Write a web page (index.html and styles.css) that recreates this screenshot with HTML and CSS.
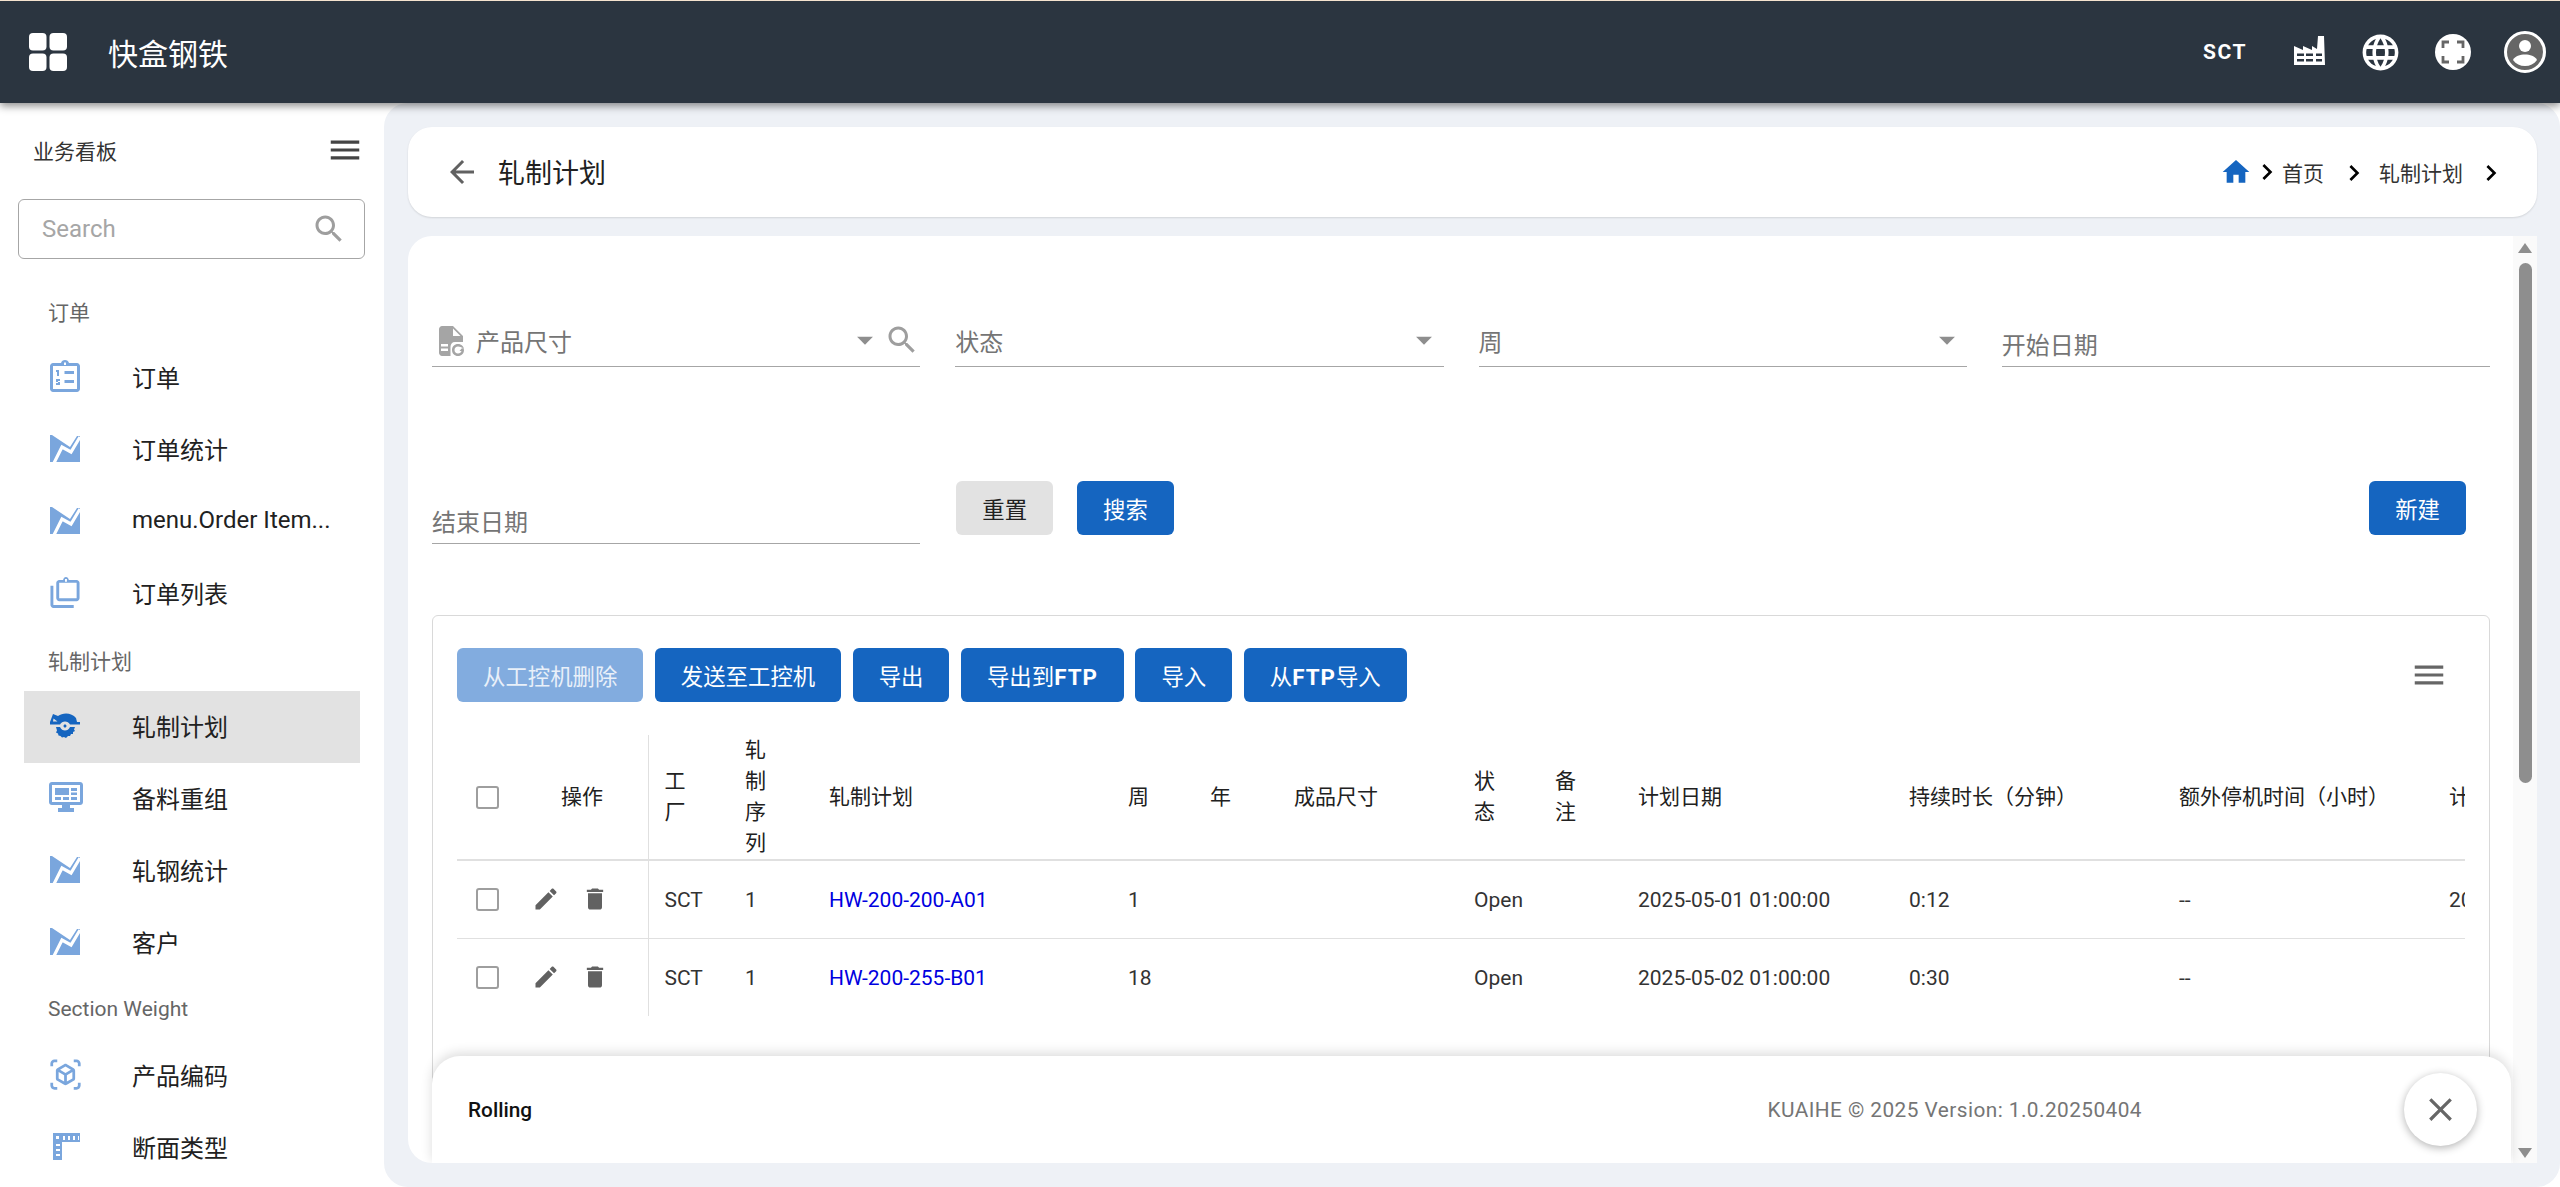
FILE: index.html
```html
<!DOCTYPE html>
<html lang="zh">
<head>
  <meta charset="UTF-8" />
  <meta name="viewport" content="width=device-width, initial-scale=1.0" />
  <title>轧制计划</title>
  <link rel="stylesheet" href="styles.css">
</head>
<body>
  <svg class="defs" width="0" height="0">
    <symbol id="i-chart" viewBox="0 0 30 27"><path d="M0 0H2L11 6L20 12L27 1H30V27H0Z"/><path d="M4 28L12 12L21 17L30 2" fill="none" stroke="#fff" stroke-width="3.200"/></symbol>
    <symbol id="i-search" viewBox="0 0 24 24"><path d="M15.500 14h-.79l-.28-.27C15.410 12.590 16 11.110 16 9.500 16 5.910 13.090 3 9.500 3S3 5.910 3 9.500 5.910 16 9.500 16c1.610 0 3.090-.59 4.230-1.570l.27.28v.79l5 4.990L20.490 19l-4.990-5zm-6 0C7.010 14 5 11.990 5 9.500S7.010 5 9.500 5 14 7.010 14 9.500 11.990 14 9.500 14z"/></symbol>
    <symbol id="i-menu" viewBox="0 0 24 24"><path d="M3 18h18v-2H3v2zm0-5h18v-2H3v2zm0-7v2h18V6H3z"/></symbol>
    <symbol id="i-chev" viewBox="0 0 24 24"><path d="M8.590 16.590L13.170 12 8.590 7.410 10 6l6 6-6 6z"/></symbol>
    <symbol id="i-drop" viewBox="0 0 24 24"><path d="M7 10l5 5 5-5z"/></symbol>
    <symbol id="i-edit" viewBox="0 0 24 24"><path d="M3 17.250V21h3.750L17.810 9.940l-3.750-3.750L3 17.250zM20.710 7.040c.39-.39.39-1.020 0-1.410l-2.340-2.340c-.39-.39-1.020-.39-1.410 0l-1.830 1.830 3.750 3.750 1.830-1.830z"/></symbol>
    <symbol id="i-del" viewBox="0 0 24 24"><path d="M6 19c0 1.100.9 2 2 2h8c1.100 0 2-.9 2-2V7H6v12zM19 4h-3.500l-1-1h-5l-1 1H5v2h14V4z"/></symbol>
  </svg>

  <header class="topbar">
    <svg class="logo" viewBox="0 0 38 38"><rect width="17.500" height="17.500" rx="4"/><rect x="20.500" width="17.500" height="17.500" rx="4"/><rect y="20.500" width="17.500" height="17.500" rx="4"/><rect x="20.500" y="20.500" width="17.500" height="17.500" rx="4"/></svg>
    <div class="brand">快盒钢铁</div>
    <div class="top-actions">
      <span class="plant">SCT</span>
      <svg class="top-ico factory" viewBox="0 0 31 29"><path fill-rule="evenodd" d="M0 29V10L9 14V10L18 14V10L23 13L24 0H30L31 29ZM3 17.500V20H10V17.500ZM12 17.500V20H19V17.500ZM22 17.500V20H28V17.500ZM3 23V25.500H10V23ZM12 23V25.500H19V23ZM22 23V25.500H28V23Z"/></svg>
      <svg class="top-ico globe" viewBox="0 0 24 24"><path d="M11.990 2C6.470 2 2 6.480 2 12s4.470 10 9.990 10C17.520 22 22 17.520 22 12S17.520 2 11.990 2zm6.930 6h-2.950c-.32-1.250-.78-2.450-1.380-3.560 1.840.63 3.370 1.910 4.330 3.560zM12 4.040c.83 1.200 1.480 2.530 1.910 3.960h-3.820c.43-1.430 1.080-2.760 1.910-3.960zM4.260 14C4.100 13.360 4 12.690 4 12s.1-1.360.26-2h3.380c-.08.66-.14 1.320-.14 2 0 .68.06 1.340.14 2H4.260zm.82 2h2.950c.32 1.250.78 2.450 1.380 3.560-1.840-.63-3.370-1.900-4.330-3.560zm2.950-8H5.080c.96-1.660 2.490-2.930 4.330-3.560C8.810 5.550 8.350 6.750 8.030 8zM12 19.960c-.83-1.200-1.480-2.530-1.910-3.960h3.820c-.43 1.430-1.080 2.760-1.910 3.960zM14.340 14H9.660c-.09-.66-.16-1.320-.16-2 0-.68.07-1.350.16-2h4.680c.09.65.16 1.320.16 2 0 .68-.07 1.340-.16 2zm.25 5.560c.6-1.110 1.060-2.310 1.380-3.560h2.950c-.96 1.650-2.490 2.930-4.330 3.560zM16.360 14c.08-.66.14-1.320.14-2 0-.68-.06-1.340-.14-2h3.380c.16.64.26 1.310.26 2s-.1 1.360-.26 2h-3.380z"/></svg>
      <svg class="top-ico full" viewBox="0 0 36 36"><circle cx="18" cy="18" r="18"/><path d="M8 14V8H14M22 8H28V14M28 22V28H22M14 28H8V22" fill="none" stroke="#666" stroke-width="2.800"/></svg>
      <svg class="top-ico account" viewBox="0 0 42 42"><circle cx="21" cy="21" r="19.500" fill="#666" stroke="#fff" stroke-width="3"/><circle cx="21" cy="15" r="6" fill="#fff"/><path d="M9 29C11 25 16 23.500 21 23.500S31 25 33 29C30 33 26 35 21 35S12 33 9 29Z" fill="#fff"/></svg>
    </div>
  </header>

  <div class="app">
    <aside class="sidebar">
      <div class="side-head">
        <span>业务看板</span>
        <svg class="side-burger"><use href="#i-menu"/></svg>
      </div>
      <div class="side-search">
        <span>Search</span>
        <svg class="search-ico"><use href="#i-search"/></svg>
      </div>

      <div class="nav-label">订单</div>
      <div class="nav-item">
        <svg class="nav-ico" viewBox="0 0 30 32"><path fill-rule="evenodd" d="M3 3H11C11.500 1 13 0 15 0S18.500 1 19 3H27C28.500 3 30 4.500 30 6V29C30 30.500 28.500 32 27 32H3C1.500 32 0 30.500 0 29V6C0 4.500 1.500 3 3 3ZM3 6V29H27V6ZM14 2.500V5H16V2.500ZM14.500 11H24V14H14.500ZM14.500 20H24V23H14.500ZM6 10H9V16H7V12H6ZM6 19H10V21H8V22H10V25H6V23H8V22H6Z"/></svg>
        <span>订单</span>
      </div>
      <div class="nav-item"><svg class="nav-ico chart"><use href="#i-chart"/></svg><span>订单统计</span></div>
      <div class="nav-item"><svg class="nav-ico chart"><use href="#i-chart"/></svg><span>menu.Order Item...</span></div>
      <div class="nav-item">
        <svg class="nav-ico" viewBox="0 0 30 33"><path fill-rule="evenodd" d="M9 4H13C13.500 2 14.500 1 16 1S18.500 2 19 4H27C28.500 4 30 5.500 30 7V23C30 24.500 28.500 26 27 26H9C7.500 26 6 24.500 6 23V7C6 5.500 7.500 4 9 4ZM9 7V23H27V7ZM15 3V6H17V3ZM0 10H3V30H24V33H3C1.500 33 0 31.500 0 30Z"/></svg>
        <span>订单列表</span>
      </div>

      <div class="nav-label">轧制计划</div>
      <div class="nav-item active">
        <svg class="nav-ico saw" viewBox="0 0 30 25"><path fill-rule="evenodd" d="M0 9L3 1L8 3C13 -1 22 -.5 26 5L27 9H30V11.500H20C19 9.500 17 8.500 15 8.500S11 9.500 10 11.500H0ZM3.500 5.500L3 8.500H7.500ZM15 11.500C15.900 11.500 16.500 12.100 16.500 13S15.900 14.500 15 14.500S13.500 13.900 13.500 13S14.100 11.500 15 11.500ZM6 14H10C11 16.500 13 17.500 15 17.500S19 16.500 20 14H25L24 16.500L25 18L23 19L23 21L21 21L20 23L18 23L16 25L14 24L12 24.500L10.500 23L8.500 22.500L8 20.500L6 19.500L7 17.500Z"/></svg>
        <span>轧制计划</span>
      </div>
      <div class="nav-item">
        <svg class="nav-ico monitor" viewBox="0 0 34 30"><path fill-rule="evenodd" d="M3 0H31C32.700 0 34 1.300 34 3V20C34 21.700 32.700 23 31 23H21V26H25V30H9V26H13V23H3C1.300 23 0 21.700 0 20V3C0 1.300 1.300 0 3 0ZM3 3V20H31V3ZM6 6H20V13H6ZM22 6H28V9H22ZM22 10.500H28V13H22ZM6 15H12V18H6ZM14 15H20V18H14ZM22 15H28V18H22Z"/></svg>
        <span>备料重组</span>
      </div>
      <div class="nav-item"><svg class="nav-ico chart"><use href="#i-chart"/></svg><span>轧钢统计</span></div>
      <div class="nav-item"><svg class="nav-ico chart"><use href="#i-chart"/></svg><span>客户</span></div>

      <div class="nav-label">Section Weight</div>
      <div class="nav-item">
        <svg class="nav-ico cube" viewBox="0 0 24 24"><path d="M3 4c0-.55.45-1 1-1h2V1H4C2.340 1 1 2.340 1 4v2h2V4zm0 16v-2H1v2c0 1.660 1.340 3 3 3h2v-2H4c-.55 0-1-.45-1-1zM20 1h-2v2h2c.55 0 1 .45 1 1v2h2V4c0-1.660-1.340-3-3-3zm1 19c0 .55-.45 1-1 1h-2v2h2c1.660 0 3-1.340 3-3v-2h-2v2zm-2-5.130V9.130c0-.72-.38-1.380-1-1.730l-5-2.880c-.31-.18-.65-.27-1-.27s-.69.09-1 .27L6 7.390c-.62.36-1 1.020-1 1.740v5.740c0 .72.38 1.380 1 1.730l5 2.880c.31.18.65.27 1 .27s.69-.09 1-.27l5-2.880c.62-.35 1-1.010 1-1.730zm-8 2.300l-4-2.300v-4.630l4 2.330v4.600zm1-6.330L8.040 8.530 12 6.250l3.960 2.280L12 10.840zm5 4.030l-4 2.300v-4.600l4-2.330v4.630z"/></svg>
        <span>产品编码</span>
      </div>
      <div class="nav-item">
        <svg class="nav-ico ruler" viewBox="0 0 28 27"><path fill-rule="evenodd" d="M1 0H28V9H10V27H1ZM4 3V6H7V3ZM11 3V7H13V3ZM16 3V7H18V3ZM21 3V7H23V3ZM26 3V7H27V3ZM4 11V13H8V11ZM4 16V18H8V16ZM4 21V23H8V21Z"/></svg>
        <span>断面类型</span>
      </div>
    </aside>

    <main class="main">
      <div class="page-head">
        <svg class="back" viewBox="0 0 24 24"><path d="M20 11H7.830l5.590-5.590L12 4l-8 8 8 8 1.410-1.410L7.830 13H20v-2z"/></svg>
        <h1>轧制计划</h1>
        <nav class="crumbs">
          <svg class="home" viewBox="0 0 24 24"><path d="M10 20v-6h4v6h5v-8h3L12 3 2 12h3v8z"/></svg>
          <svg class="chev"><use href="#i-chev"/></svg>
          <span>首页</span>
          <svg class="chev wide"><use href="#i-chev"/></svg>
          <span>轧制计划</span>
          <svg class="chev wide"><use href="#i-chev"/></svg>
        </nav>
      </div>

      <section class="content">
        <div class="scroll-area">
          <div class="filters">
            <div class="field">
              <svg class="file-ico" viewBox="0 0 26 30"><path fill-rule="evenodd" d="M3 0H14L24 10V16H16C13 16 11.500 18 11.500 21V30H3C1.500 30 0 28.500 0 27V3C0 1.500 1.500 0 3 0ZM14 2.500V10H21.500ZM2 18V20.500H9V18ZM2 22.500V25H9V22.500ZM19 18C22.500 18 25 20.500 25 24C25 27.500 22.500 30 19 30C15.500 30 13 27.500 13 24C13 20.500 15.500 18 19 18ZM19 20.500C17 20.500 15.500 22 15.500 24S17 27.500 19 27.500S22 26.500 22.500 25H20.500L23.500 21.500L25 24C25 24 23 20.500 19 20.500Z"/></svg>
              <span class="field-label">产品尺寸</span>
              <svg class="drop"><use href="#i-drop"/></svg>
              <svg class="field-search"><use href="#i-search"/></svg>
            </div>
            <div class="field"><span class="field-label">状态</span><svg class="drop last"><use href="#i-drop"/></svg></div>
            <div class="field"><span class="field-label">周</span><svg class="drop last"><use href="#i-drop"/></svg></div>
            <div class="field date"><span class="field-label">开始日期</span></div>
            <div class="field date"><span class="field-label">结束日期</span></div>
            <div class="form-btns">
              <button class="btn btn-grey">重置</button>
              <button class="btn">搜索</button>
            </div>
            <div class="form-new"><button class="btn">新建</button></div>
          </div>

          <div class="table-card">
            <div class="toolbar">
              <button class="btn btn-off">从工控机删除</button>
              <button class="btn">发送至工控机</button>
              <button class="btn">导出</button>
              <button class="btn">导出到<b>FTP</b></button>
              <button class="btn">导入</button>
              <button class="btn">从<b>FTP</b>导入</button>
              <svg class="tool-menu"><use href="#i-menu"/></svg>
            </div>
            <div class="table-wrap">
              <table class="grid">
                <colgroup>
                  <col class="c-check"><col class="c-ops"><col class="c-plant"><col class="c-seq"><col class="c-plan">
                  <col class="c-week"><col class="c-year"><col class="c-size"><col class="c-state"><col class="c-note">
                  <col class="c-date"><col class="c-dur"><col class="c-stop"><col class="c-last">
                </colgroup>
                <thead>
                  <tr>
                    <th><span class="check"></span></th>
                    <th class="ops">操作</th>
                    <th>工厂</th><th>轧制序列</th><th>轧制计划</th><th>周</th><th>年</th><th>成品尺寸</th>
                    <th>状态</th><th>备注</th><th>计划日期</th><th>持续时长（分钟）</th><th>额外停机时间（小时）</th><th>计划结束时间</th>
                  </tr>
                </thead>
                <tbody>
                  <tr>
                    <td><span class="check"></span></td>
                    <td class="ops"><svg class="row-ico"><use href="#i-edit"/></svg><svg class="row-ico"><use href="#i-del"/></svg></td>
                    <td>SCT</td><td>1</td><td><a class="plan-link">HW-200-200-A01</a></td><td>1</td><td></td><td></td>
                    <td>Open</td><td></td><td>2025-05-01 01:00:00</td><td>0:12</td><td>--</td><td>2025-05-01 01:12:00</td>
                  </tr>
                  <tr>
                    <td><span class="check"></span></td>
                    <td class="ops"><svg class="row-ico"><use href="#i-edit"/></svg><svg class="row-ico"><use href="#i-del"/></svg></td>
                    <td>SCT</td><td>1</td><td><a class="plan-link">HW-200-255-B01</a></td><td>18</td><td></td><td></td>
                    <td>Open</td><td></td><td>2025-05-02 01:00:00</td><td>0:30</td><td>--</td><td></td>
                  </tr>
                </tbody>
              </table>
            </div>
          </div>
        </div>

        <div class="scrollbar">
          <span class="arrow-up"></span>
          <span class="thumb"></span>
          <span class="arrow-down"></span>
        </div>

        <footer class="foot">
          <span class="foot-name">Rolling</span>
          <span class="foot-ver">KUAIHE © 2025 Version: 1.0.20250404</span>
          <button class="foot-close"><svg viewBox="0 0 24 24"><path d="M19 6.410L17.590 5 12 10.590 6.410 5 5 6.410 10.590 12 5 17.590 6.410 19 12 13.410 17.590 19 19 17.590 13.410 12z"/></svg></button>
        </footer>
      </section>
    </main>
  </div>
</body>
</html>
```

FILE: styles.css
```css
* {
  box-sizing: border-box;
}
html, body {
  height: 100%;
}
body {
  margin: 0;
  overflow: hidden;
  background: #fff;
  color: #212121;
  font-family: Roboto, "Noto Sans CJK SC", sans-serif;
  font-size: 21px;
}
.defs {
  position: absolute;
}
button {
  font-family: inherit;
}

/* top bar */
.topbar {
  position: relative;
  z-index: 2;
  display: flex;
  align-items: center;
  height: 103px;
  padding-left: 29px;
  background: #2b3540;
  border-top: 1px solid #f5e3cf;
  box-shadow: 0 3px 8px rgba(0, 0, 0, .45);
  color: #fff;
}
.logo {
  width: 38px;
  height: 38px;
  fill: #fff;
}
.brand {
  margin-left: 41px;
  font-size: 30px;
  font-weight: 400;
}
.top-actions {
  display: flex;
  align-items: center;
  margin-left: auto;
}
.plant {
  font-size: 21px;
  font-weight: 700;
  letter-spacing: 1.500px;
}
.top-ico {
  display: block;
  fill: #fff;
}
.factory {
  width: 31px;
  height: 29px;
  margin: -3px 0 0 47px;
}
.globe {
  width: 43px;
  height: 43px;
  margin-left: 34px;
}
.full {
  width: 36px;
  height: 36px;
  margin-left: 33px;
}
.account {
  width: 42px;
  height: 42px;
  margin: 0 14px 0 33px;
}

.app {
  display: flex;
  height: 1084px;
}

/* sidebar */
.sidebar {
  flex: none;
  width: 384px;
  background: #fff;
}
.side-head {
  display: flex;
  align-items: center;
  justify-content: space-between;
  height: 94px;
  padding: 0 20px 0 33px;
  font-size: 21px;
  color: #333;
}
.side-burger {
  width: 38px;
  height: 38px;
  fill: #444;
}
.side-search {
  display: flex;
  align-items: center;
  justify-content: space-between;
  width: 347px;
  height: 60px;
  margin: 2px 0 0 18px;
  padding: 0 17px 0 23px;
  border: 1px solid #a6a6a6;
  border-radius: 6px;
  font-size: 24px;
  color: #a6a6a6;
}
.search-ico {
  width: 36px;
  height: 36px;
  fill: #9e9e9e;
}
.nav-label {
  display: flex;
  align-items: center;
  height: 61px;
  padding: 0 0 2px 48px;
  font-size: 21px;
  color: #666;
}
.side-search + .nav-label {
  margin-top: 22px;
}
.nav-item {
  display: flex;
  align-items: center;
  height: 72px;
  margin: 0 24px;
  padding: 0 0 4px 108px;
  position: relative;
  font-size: 24px;
  color: #212121;
}
.nav-item.active {
  background: #e2e2e2;
}
.nav-ico {
  position: absolute;
  left: 26px;
  width: 30px;
  height: 32px;
  fill: #7aa6dd;
}
.chart {
  height: 27px;
}
.saw {
  height: 25px;
  fill: #1565c0;
}
.monitor {
  left: 25px;
  width: 34px;
  height: 30px;
}
.cube {
  left: 25px;
  width: 33px;
  height: 33px;
}
.ruler {
  left: 28px;
  width: 28px;
  height: 27px;
}

/* main area */
.main {
  flex: 1;
  min-width: 0;
  display: flex;
  flex-direction: column;
  gap: 19px;
  padding: 24px 23px 24px 24px;
  background: #eef1f6;
  border-radius: 24px;
}
.page-head {
  flex: none;
  display: flex;
  align-items: center;
  height: 90px;
  padding: 0 21px 0 36px;
  background: #fff;
  border-radius: 24px;
  box-shadow: 0 1px 2px rgba(0, 0, 0, .12);
}
.back {
  width: 36px;
  height: 36px;
  fill: #616161;
}
.page-head h1 {
  margin: 0 0 2px 18px;
  font-size: 27px;
  font-weight: 400;
}
.crumbs {
  display: flex;
  align-items: center;
  margin-left: auto;
  font-size: 21px;
  color: #333;
}
.home {
  width: 32px;
  height: 32px;
  fill: #1565c0;
}
.chev {
  width: 32px;
  height: 32px;
  fill: #000;
  margin: 0 -1px;
}
.chev.wide {
  margin: 2px 9px 0 14px;
}
.chev.wide:last-child {
  margin: 2px 9px 0 12px;
}

.content {
  flex: 1;
  position: relative;
  display: flex;
  min-height: 0;
  overflow: hidden;
  background: #fff;
  border-radius: 24px 0 0 24px;
}
.scroll-area {
  flex: 1;
  min-width: 0;
  padding: 31px 23px 0 24px;
}

/* filters */
.filters {
  display: grid;
  grid-template-columns: repeat(4, minmax(0, 1fr));
  grid-auto-rows: 100px;
  column-gap: 35px;
  row-gap: 77px;
  align-items: end;
}
.field {
  position: relative;
  display: flex;
  align-items: center;
  height: 50px;
  padding-bottom: 2px;
  border-bottom: 1px solid #a6a6a6;
  font-size: 24px;
  color: #757575;
}
.field.date .field-label {
  padding-top: 5px;
}
.file-ico {
  width: 26px;
  height: 30px;
  margin: 0 11px 0 7px;
  fill: #a5a5a5;
}
.drop {
  position: absolute;
  right: 36px;
  top: 4px;
  width: 38px;
  height: 38px;
  fill: #8e8e8e;
}
.drop.last {
  right: 1px;
}
.field-search {
  position: absolute;
  right: 0;
  top: 5px;
  width: 36px;
  height: 36px;
  fill: #9e9e9e;
}
.form-btns {
  display: flex;
  gap: 24px;
  padding: 0 0 9px 1px;
}
.form-new {
  grid-column: 4;
  display: flex;
  justify-content: flex-end;
  padding: 0 24px 9px 0;
}
.btn {
  height: 54px;
  padding: 0 26px;
  border: none;
  border-radius: 6px;
  background: #1565c0;
  color: #fff;
  font-size: 22.400px;
  font-weight: 400;
  white-space: nowrap;
}
.btn b {
  font-weight: 700;
  letter-spacing: 1px;
}
.btn-grey {
  background: #e2e2e2;
  color: #212121;
}
.btn-off {
  background: #82acdf;
  color: #e9f0f9;
}

/* table card */
.table-card {
  height: 600px;
  margin-top: 71px;
  padding: 32px 24px 0 24px;
  border: 1px solid #d9d9d9;
  border-radius: 6px;
}
.toolbar {
  display: flex;
  align-items: center;
  gap: 11.500px;
  margin-bottom: 33px;
}
.tool-menu {
  width: 38px;
  height: 38px;
  margin: 0 17px 0 auto;
  fill: #666;
}
.table-wrap {
  overflow: hidden;
}
.grid {
  width: 2100px;
  table-layout: fixed;
  border-collapse: collapse;
  font-size: 21px;
}
.c-check { width: 78px; }
.c-ops { width: 113px; }
.c-plant { width: 81px; }
.c-seq { width: 84px; }
.c-plan { width: 299px; }
.c-week { width: 82px; }
.c-year { width: 84px; }
.c-size { width: 180px; }
.c-state { width: 81px; }
.c-note { width: 83px; }
.c-date { width: 271px; }
.c-dur { width: 270px; }
.c-stop { width: 270px; }
.c-last { width: 284px; }
.grid th {
  height: 125px;
  padding: 0 32px 0 16px;
  border-bottom: 2px solid #e0e0e0;
  font-weight: 400;
  line-height: 31px;
  text-align: left;
}
.grid td {
  height: 78px;
  padding: 2px 0 0 16px;
  border-bottom: 1px solid #e0e0e0;
  color: #333;
  white-space: nowrap;
}
.grid tbody tr:last-child td {
  border-bottom: none;
}
.grid th:nth-child(2), .grid td:nth-child(2) {
  border-right: 1px solid #e0e0e0;
}
.grid th:first-child, .grid td:first-child {
  padding: 0 0 0 19px;
}
.grid th:nth-child(11), .grid th:nth-child(12), .grid th:nth-child(13), .grid th:nth-child(14) {
  white-space: nowrap;
  padding-right: 0;
}
.grid th.ops {
  padding: 0 0 0 26px;
}
.grid td.ops {
  padding: 0;
}
.check {
  display: block;
  width: 23px;
  height: 23px;
  border: 2px solid #9e9e9e;
  border-radius: 3px;
}
.row-ico {
  width: 28px;
  height: 28px;
  margin-left: -3px;
  fill: #616161;
  vertical-align: middle;
}
.row-ico + .row-ico {
  margin-left: 21px;
}
.plan-link {
  color: #0000e0;
}

/* scrollbar column */
.scrollbar {
  flex: none;
  width: 24px;
  display: flex;
  flex-direction: column;
  align-items: center;
  padding-top: 7px;
  background: #fafafa;
}
.arrow-up {
  width: 0;
  height: 0;
  border: 7px solid transparent;
  border-top: none;
  border-bottom: 10px solid #8e8e8e;
}
.thumb {
  width: 13px;
  height: 520px;
  margin-top: 10px;
  background: #8e8e8e;
  border-radius: 7px;
}
.arrow-down {
  width: 0;
  height: 0;
  margin-top: 365px;
  border: 7px solid transparent;
  border-bottom: none;
  border-top: 10px solid #8e8e8e;
}

/* sticky footer over the card */
.foot {
  position: absolute;
  left: 24px;
  bottom: 0;
  display: flex;
  align-items: center;
  width: 2079px;
  height: 107px;
  padding: 0 34px 0 36px;
  background: #fff;
  border-radius: 28px 28px 0 0;
  box-shadow: 0 -3px 12px rgba(0, 0, 0, .14);
}
.foot-name {
  font-size: 20.800px;
  font-weight: 500;
  color: #111;
}
.foot-ver {
  margin: 0 262px 0 auto;
  font-size: 20.800px;
  letter-spacing: .45px;
  color: #757575;
}
.foot-close {
  width: 73px;
  height: 73px;
  padding: 17px;
  border: none;
  border-radius: 50%;
  background: #fff;
  box-shadow: 0 2px 8px rgba(0, 0, 0, .3);
}
.foot-close svg {
  display: block;
  width: 39px;
  height: 39px;
  fill: #666;
}
```
